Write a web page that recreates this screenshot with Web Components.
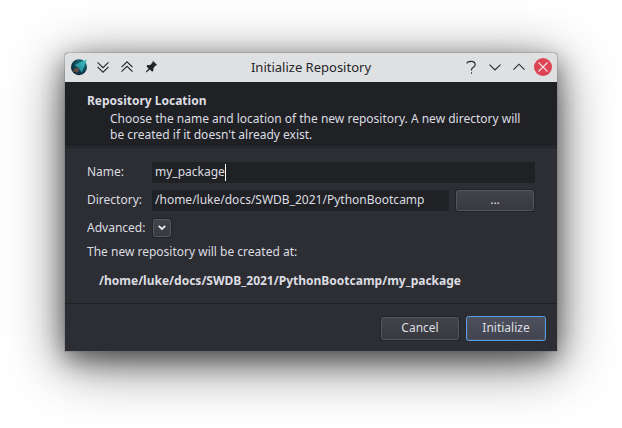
<!DOCTYPE html>
<html lang="en"><head><meta charset="utf-8"><title>Initialize Repository</title>
<style>
html,body{margin:0;width:622px;height:428px;overflow:hidden;background:#fff}
body{font:12px/16px "Noto Sans","Open Sans",sans-serif;color:#dcdde2}
</style></head><body>
<app-desktop></app-desktop>
<script>
const define=(name,html)=>customElements.define(name,class extends HTMLElement{
  constructor(){super();this.attachShadow({mode:'open'}).innerHTML=html}
});
define('title-bar',`<style>
:host{display:flex;align-items:center;height:29px;box-sizing:border-box;background:#dfe0e2;border-radius:3px 3px 0 0;color:#242529;padding:0 4px 0 5px}
svg{display:block;flex:none}.t{flex:1;text-align:center;font-size:13px;white-space:nowrap;padding:0 3px 2px 0}
</style>
<svg width="92" height="29" viewBox="70 53 92 29" fill="none" stroke="#26272b" stroke-width="1.15">
<defs><radialGradient id="g" cx=".65" cy=".3" r=".8"><stop stop-color="#167e88"/><stop offset=".5" stop-color="#10485b"/><stop offset="1" stop-color="#071c2b"/></radialGradient>
<linearGradient id="a" x1="1" y1="0" x2="0" y2="1"><stop stop-color="#40c6ca"/><stop offset="1" stop-color="#1b7b88"/></linearGradient></defs>
<circle cx="79" cy="67.2" r="8" fill="url(#g)" stroke="none"/>
<path d="M87 59.2 74.5 65l4 2.5 3.2 5.2z" fill="url(#a)" stroke="none"/>
<path d="M78.5 67.5 74 69l-1 3 2.8-.6.8 2.2 2-2.6z" fill="#67503d" stroke="none"/>
<path d="m97.5 62.3 5.5 5.4 5.5-5.4m-11 4.5 5.5 5.4 5.5-5.4"/>
<path d="m121.5 67.2 5.5-5.4 5.5 5.4m-11 4.5 5.5-5.4 5.5 5.4"/>
<path d="m152.9 60.8 4.2 4.2-1.4.6-2.2 2.4-.2 2.7-1.1 1.1-2.3-2.2-3.5 2.8-.6-.6 2.8-3.4-2.2-2.1 1.1-1.2 2.7-.2 2.3-2.4z" fill="#242529" stroke="none"/>
</svg><div class="t"><slot></slot></div>
<svg width="90" height="29" viewBox="463 53 90 29" fill="none" stroke="#26272b" stroke-width="1.15">
<path d="M467 63.5c0-1.4 1.4-2.2 4-2.2s4.2 1.3 4.2 3.4c0 2.5-3.7 2.6-3.7 5.1v.8"/><path d="M471 72.3h1v1.4h-1z" fill="#26272b" stroke="none"/>
<path d="m489.5 64.6 5.5 5.4 5.5-5.4m13 5 5.5-5.4 5.5 5.4"/>
<circle cx="543" cy="67" r="9" fill="#dc4453" stroke="none"/><path d="m538.5 62.5 9 9m0-9-9 9" stroke="#f5dfe2"/></svg>`);
define('wizard-header',`<style>
:host{display:block;box-sizing:border-box;height:66px;background:#202125;padding:11px 22px 0;border-bottom:1px solid #202125;box-shadow:inset 0 -1px #2c2d32}
b{display:block;height:17px}p{margin:0 -10px 0 23px;line-height:16px;padding-top:1px;white-space:nowrap}
</style><b><slot name="title"></slot></b><p><slot></slot></p>`);
define('form-row',`<style>
:host{display:flex;align-items:center;height:22px;margin-bottom:6px}
label{width:65px;flex:none;white-space:nowrap}
</style><label><slot name="label"></slot></label><slot></slot>`);
define('text-field',`<style>
:host{display:flex;align-items:center;box-sizing:border-box;height:21px;background:#202125;padding-left:3px;flex:none}
:host([long]){width:383px}:host(:not([long])){width:297px;margin-right:7px}
i{display:none;width:1px;height:17px;background:#fff}:host([long]) i{display:block}
</style><span><slot></slot></span><i></i>`);
define('push-button',`<style>
:host{display:flex;align-items:center;justify-content:center;box-sizing:border-box;flex:none;width:78px;height:21px;border:1px solid #56575c;border-radius:2.5px;background:linear-gradient(#434449,#38393e);box-shadow:0 0 0 1px #222327}
:host([tall]){height:23px}
:host([small]){width:18px;height:18px;margin-left:1px}
:host([primary]){width:80px;height:25px;border-color:#559be3;background:linear-gradient(#4d505d,#424550);box-shadow:inset 0 0 0 1px #505461}
</style><slot></slot>`);
define('chevron-icon',`<style>:host,svg{display:block}:host{margin-bottom:2px}</style><svg width="10" height="7" viewBox="0 0 10 7" fill="none" stroke="#e9eaed" stroke-width="1.8"><path d="M1.7 1.8 5 5l3.3-3.2"/></svg>`);
define('wizard-footer',`<style>
:host{display:flex;align-items:center;justify-content:flex-end;gap:7px;height:48px;box-sizing:border-box;border-top:1px solid #202125;padding:1px 11px 0 0}
</style><slot></slot>`);
define('dialog-window',`<style>
:host{display:flex;flex-direction:column;width:492px;height:298px;background:#2d2e33;border-radius:3px 3px 0 0;box-shadow:0 0 0 1px rgba(110,110,110,.28),0 12px 56px rgba(0,0,0,.6),0 8px 24px rgba(0,0,0,.45)}
.body{padding:13px 22px 0;flex:1}
.note{height:16px;margin-top:-1px}.path{font-weight:700;margin:13px 0 0 12px;white-space:nowrap}
</style><title-bar>Initialize Repository</title-bar>
<wizard-header><span slot="title">Repository Location</span>Choose the name and location of the new repository. A new directory will<br>be created if it doesn't already exist.</wizard-header>
<div class="body">
<form-row><span slot="label">Name:</span><text-field long>my_package</text-field></form-row>
<form-row><span slot="label">Directory:</span><text-field>/home/luke/docs/SWDB_2021/PythonBootcamp</text-field><push-button>...</push-button></form-row>
<form-row><span slot="label">Advanced:</span><push-button small><chevron-icon></chevron-icon></push-button></form-row>
<div class="note">The new repository will be created at:</div>
<div class="path">/home/luke/docs/SWDB_2021/PythonBootcamp/my_package</div>
</div>
<wizard-footer><push-button tall>Cancel</push-button><push-button primary>Initialize</push-button></wizard-footer>`);
define('app-desktop',`<style>:host{display:block;box-sizing:border-box;width:622px;height:428px;padding:53px 65px;overflow:hidden}</style><dialog-window></dialog-window>`);
</script></body></html>
